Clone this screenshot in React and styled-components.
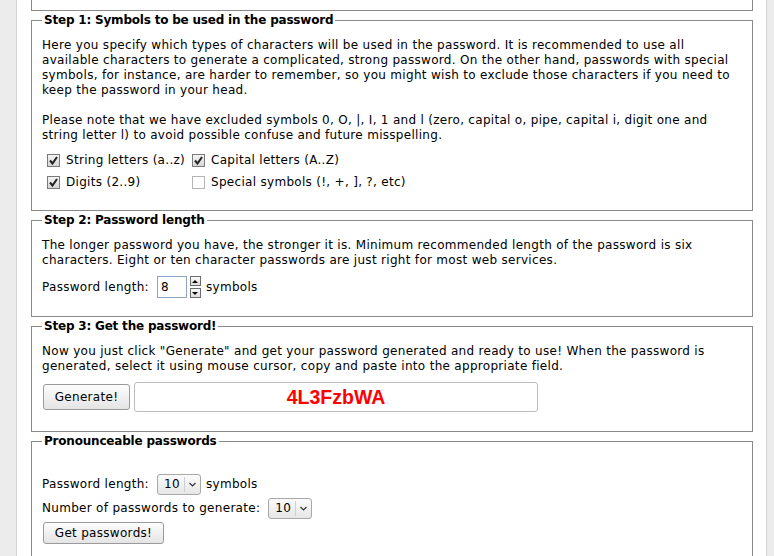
import React from 'react';
import styled, { createGlobalStyle } from 'styled-components';

const GlobalStyle = createGlobalStyle`
  html, body {
    margin: 0;
    padding: 0;
    background: #ececec;
  }

  body {
    color: #000;
    font-family: 'DejaVu Sans', Verdana, sans-serif;
    font-size: 12px;
    letter-spacing: 0.3px;
    line-height: 15px;
  }
`;

const Page = styled.div`
  background: #fff;
  border-left: 1px solid #d4d4d4;
  border-right: 1px solid #d4d4d4;
  margin: 0 7px 0 16px;
  min-height: 100vh;
  overflow: hidden;
  padding: 0 13px 0 14px;
`;

const PrevBoxTail = styled.div`
  border: 1px solid #8a8a8a;
  border-top: none;
  box-sizing: border-box;
  height: 11px;
`;

const Box = styled.fieldset`
  border: 1px solid #8a8a8a;
  margin: 2px 0 0;
  min-width: 0;
  padding: ${(p) => p.$pad || '10px 10px 18px'};
`;

const Legend = styled.legend`
  font-weight: bold;
  letter-spacing: -0.2px;
  line-height: 15px;
  padding: 0 2px;
`;

const Text = styled.p`
  margin: 0 0 ${(p) => (p.$last ? 0 : 15)}px;
  white-space: nowrap;
`;

const OptionGrid = styled.div`
  display: grid;
  grid-auto-rows: 22px;
  grid-template-columns: 145px auto;
  margin: 6px 0 0 5px;
`;

const Option = styled.label`
  align-items: center;
  display: flex;
  gap: 6px;
`;

const Tick = styled.span`
  align-items: center;
  background: ${(p) => (p.$on ? 'linear-gradient(#f4f4f4, #d6d6d6)' : '#fff')};
  border: 1px solid ${(p) => (p.$on ? '#7a7a7a' : '#b4b4b4')};
  box-sizing: border-box;
  display: inline-flex;
  height: 13px;
  justify-content: center;
  width: 13px;
`;

const Row = styled.div`
  align-items: center;
  display: flex;
  gap: ${(p) => p.$gap || 5}px;
  height: ${(p) => p.$h || 22}px;
  margin-top: ${(p) => p.$top || 0}px;
`;

const FieldLabel = styled.span`
  margin-right: 3px;
`;

const NumberBox = styled.span`
  border: 1px solid #8fa5c4;
  box-sizing: border-box;
  display: inline-block;
  height: 22px;
  line-height: 20px;
  padding-left: 3px;
  width: 30px;
`;

const Spinner = styled.span`
  display: inline-flex;
  flex-direction: column;
  gap: 2px;
  margin-left: -2px;
`;

const SpinButton = styled.span`
  align-items: center;
  background: linear-gradient(#fafafa, #dedede);
  border: 1px solid #6c6c6c;
  box-sizing: border-box;
  display: flex;
  height: 10px;
  justify-content: center;
  width: 11px;

  &::after {
    border-left: 3px solid transparent;
    border-right: 3px solid transparent;
    ${(p) => (p.$down ? 'border-top: 3px solid #000;' : 'border-bottom: 3px solid #000;')}
    content: '';
  }
`;

const Button = styled.button`
  background: linear-gradient(#fdfdfd, #e4e4e4);
  border: 1px solid #9a9a9a;
  border-radius: 3px;
  color: #000;
  font-family: 'DejaVu Sans', Verdana, sans-serif;
  font-size: 12px;
  height: ${(p) => p.$h || 22}px;
  letter-spacing: 0.3px;
  line-height: 15px;
  margin-left: 1px;
  padding: 0 8px;
  width: ${(p) => p.$w}px;
`;

const ResultField = styled.div`
  align-items: center;
  border: 1px solid #bdbdbd;
  border-radius: 3px;
  box-sizing: border-box;
  color: #f00;
  display: flex;
  font-family: 'Liberation Sans', Arial, sans-serif;
  font-size: 19.5px;
  font-weight: bold;
  height: 30px;
  justify-content: center;
  letter-spacing: 0;
  width: 404px;
`;

const Select = styled.span`
  align-items: center;
  background: linear-gradient(#fbfbfb, #e6e6e6);
  border: 1px solid #a8a8a8;
  border-radius: 3px;
  box-sizing: border-box;
  display: inline-flex;
  height: 21px;
  width: 44px;
`;

const SelectValue = styled.span`
  border-right: 1px solid #cfcfcf;
  line-height: 15px;
  padding: 0 4px 0 6px;
`;

const SelectArrow = styled.span`
  display: flex;
  justify-content: center;
  flex: 1;
`;

const Spacer = styled.div`
  height: 15px;
`;

const Check = () => (
  <svg width="9" height="9" viewBox="0 0 9 9">
    <path d="M1 4.5 L3.5 7.5 L8 1" fill="none" stroke="#222" strokeWidth="2" />
  </svg>
);

const Chevron = () => (
  <svg width="7" height="5" viewBox="0 0 7 5">
    <path d="M0.5 1 L3.5 4 L6.5 1" fill="none" stroke="#333" strokeWidth="1.2" />
  </svg>
);

const Checkbox = ({ on, children }) => (
  <Option>
    <Tick $on={on}>{on && <Check />}</Tick>
    {children}
  </Option>
);

const Dropdown = ({ value }) => (
  <Select>
    <SelectValue>{value}</SelectValue>
    <SelectArrow>
      <Chevron />
    </SelectArrow>
  </Select>
);

const App = () => (
  <>
    <GlobalStyle />
    <Page>
      <PrevBoxTail />

      <Box $pad="10px 10px 17px">
        <Legend>Step 1: Symbols to be used in the password</Legend>
        <Text>
          Here you specify which types of characters will be used in the password. It is recommended to use all
          <br />
          available characters to generate a complicated, strong password. On the other hand, passwords with special
          <br />
          symbols, for instance, are harder to remember, so you might wish to exclude those characters if you need to
          <br />
          keep the password in your head.
        </Text>
        <Text $last>
          Please note that we have excluded symbols 0, O, |, I, 1 and l (zero, capital o, pipe, capital i, digit one and
          <br />
          string letter l) to avoid possible confuse and future misspelling.
        </Text>
        <OptionGrid>
          <Checkbox on>String letters (a..z)</Checkbox>
          <Checkbox on>Capital letters (A..Z)</Checkbox>
          <Checkbox on>Digits (2..9)</Checkbox>
          <Checkbox>Special symbols (!, +, ], ?, etc)</Checkbox>
        </OptionGrid>
      </Box>

      <Box>
        <Legend>Step 2: Password length</Legend>
        <Text $last>
          The longer password you have, the stronger it is. Minimum recommended length of the password is six
          <br />
          characters. Eight or ten character passwords are just right for most web services.
        </Text>
        <Row $top={8}>
          <FieldLabel>Password length:</FieldLabel>
          <NumberBox>8</NumberBox>
          <Spinner>
            <SpinButton />
            <SpinButton $down />
          </Spinner>
          symbols
        </Row>
      </Box>

      <Box $pad="10px 10px 19px">
        <Legend>Step 3: Get the password!</Legend>
        <Text $last>
          Now you just click "Generate" and get your password generated and ready to use! When the password is
          <br />
          generated, select it using mouse cursor, copy and paste into the appropriate field.
        </Text>
        <Row $top={8} $h={30} $gap={4}>
          <Button $h={26} $w={87}>Generate!</Button>
          <ResultField>4L3FzbWA</ResultField>
        </Row>
      </Box>

      <Box $pad="10px 10px 40px">
        <Legend>Pronounceable passwords</Legend>
        <Spacer />
        <Row $h={21}>
          <FieldLabel>Password length:</FieldLabel>
          <Dropdown value="10" />
          symbols
        </Row>
        <Row $h={21} $top={3}>
          <FieldLabel>Number of passwords to generate:</FieldLabel>
          <Dropdown value="10" />
        </Row>
        <Row $h={22} $top={3}>
          <Button $w={121}>Get passwords!</Button>
        </Row>
      </Box>
    </Page>
  </>
);

export default App;
